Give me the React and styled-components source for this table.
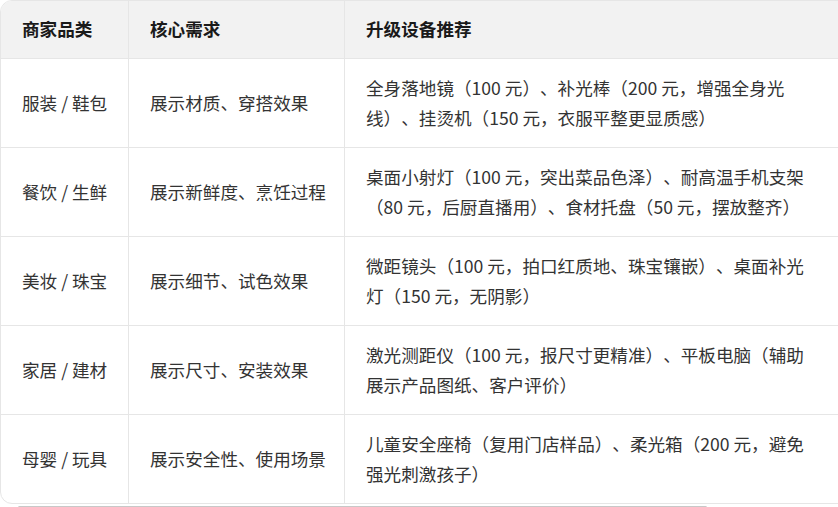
import styled, { createGlobalStyle } from "styled-components";

const GlobalStyle = createGlobalStyle`
	html, body {
		margin: 0;
		padding: 0;
		background: #fff;
		overflow: hidden;
	}
	body {
		font-family: "Noto Sans CJK SC", "Noto Sans", "Liberation Sans", sans-serif;
		color: #333;
		text-spacing-trim: space-all;
	}
`;

const Page = styled.div`
	width: 838px;
	height: 507px;
	overflow: hidden;
`;

const TableWrapper = styled.div`
	width: 900px;
	border: 1px solid #e6e6e6;
	border-radius: 12px;
	overflow: hidden;
	box-sizing: border-box;
`;

const Table = styled.table`
	border-collapse: separate;
	border-spacing: 0;
	width: 100%;
	table-layout: fixed;
	font-size: 17.6px;
	line-height: 30px;
`;

const HeadCell = styled.th`
	background: #f2f2f2;
	color: #1a1a1a;
	font-weight: 700;
	text-align: left;
	padding: 13px 0 14px 21px;
	border-right: 1px solid #e6e6e6;
	border-bottom: 1px solid #e6e6e6;
	width: ${(p) => p.$width}px;
	box-sizing: border-box;
	white-space: nowrap;

	&:last-child {
		border-right: none;
	}
`;

const Cell = styled.td`
	padding: 14px 0 14px 21px;
	border-right: 1px solid #e6e6e6;
	border-bottom: 1px solid #e6e6e6;
	vertical-align: middle;
	color: #333;
	white-space: ${(p) => (p.$wrap ? "normal" : "nowrap")};

	&:last-child {
		border-right: none;
	}

	tr:last-child > & {
		border-bottom: none;
	}
`;

const DeviceText = styled.div`
	width: 446px;
	min-height: 60px;
	text-spacing-trim: space-all;
`;

const ScrollThumb = styled.div`
	margin: 2px 0 0 18px;
	width: 689px;
	height: 3px;
	border-radius: 2px;
	background: #c8c8c8;
`;

const columns = [
	{ title: "商家品类", width: 128 },
	{ title: "核心需求", width: 216 },
	{ title: "升级设备推荐", width: 554 },
];

const rows = [
	{
		category: "服装 / 鞋包",
		need: "展示材质、穿搭效果",
		device: "全身落地镜（100 元）、补光棒（200 元，增强全身光线）、挂烫机（150 元，衣服平整更显质感）",
	},
	{
		category: "餐饮 / 生鲜",
		need: "展示新鲜度、烹饪过程",
		device: "桌面小射灯（100 元，突出菜品色泽）、耐高温手机支架（80 元，后厨直播用）、食材托盘（50 元，摆放整齐）",
	},
	{
		category: "美妆 / 珠宝",
		need: "展示细节、试色效果",
		device: "微距镜头（100 元，拍口红质地、珠宝镶嵌）、桌面补光灯（150 元，无阴影）",
	},
	{
		category: "家居 / 建材",
		need: "展示尺寸、安装效果",
		device: "激光测距仪（100 元，报尺寸更精准）、平板电脑（辅助展示产品图纸、客户评价）",
	},
	{
		category: "母婴 / 玩具",
		need: "展示安全性、使用场景",
		device: "儿童安全座椅（复用门店样品）、柔光箱（200 元，避免强光刺激孩子）",
	},
];

export default function App() {
	return (
		<Page>
			<GlobalStyle />
			<TableWrapper>
				<Table>
					<thead>
						<tr>
							{columns.map((col) => (
								<HeadCell key={col.title} $width={col.width}>
									{col.title}
								</HeadCell>
							))}
						</tr>
					</thead>
					<tbody>
						{rows.map((row) => (
							<tr key={row.category}>
								<Cell>{row.category}</Cell>
								<Cell>{row.need}</Cell>
								<Cell $wrap>
									<DeviceText>{row.device}</DeviceText>
								</Cell>
							</tr>
						))}
					</tbody>
				</Table>
			</TableWrapper>
			<ScrollThumb />
		</Page>
	);
}
